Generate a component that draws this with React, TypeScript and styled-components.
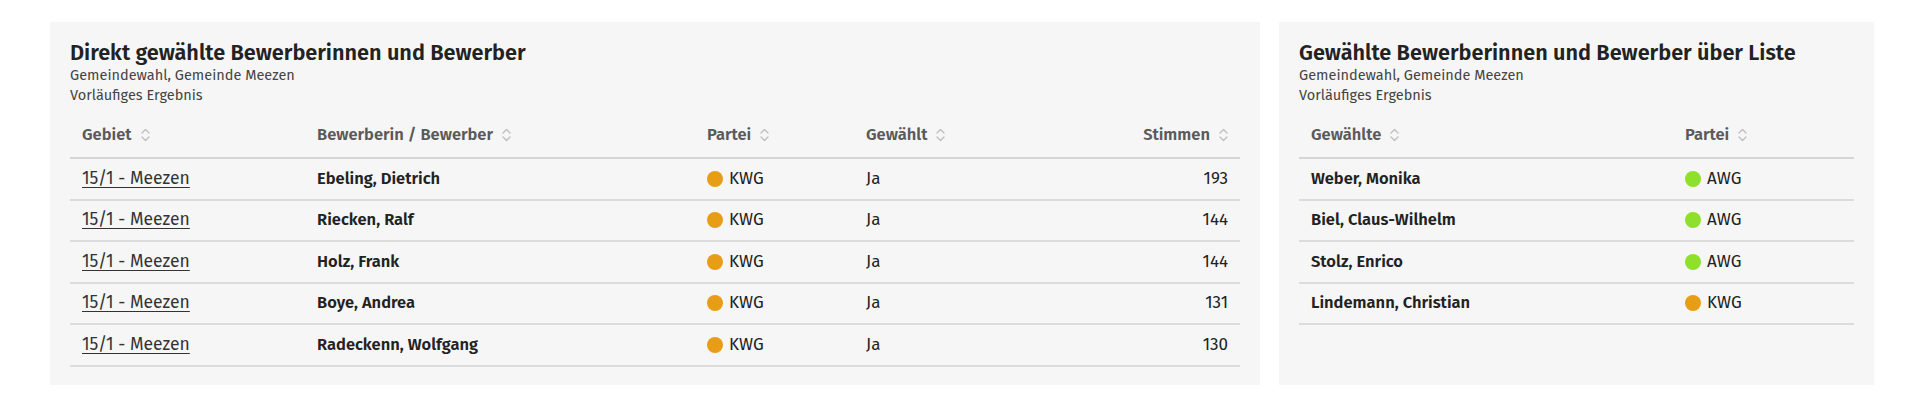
import React from "react";
import styled, { createGlobalStyle } from "styled-components";

const GlobalStyle = createGlobalStyle`
  body {
    margin: 0;
    background: #ffffff;
    font-family: "Fira Sans", Lato, "Noto Sans", sans-serif;
    color: #222222;
  }
`;

const Page = styled.div`
  display: grid;
  grid-template-columns: 1210px 595px;
  column-gap: 19px;
  align-items: stretch;
  padding: 22px 0 0 50px;
`;

const Panel = styled.section`
  background: #f6f6f6;
  padding: 19px 20px 18px;
`;

const Title = styled.h2`
  margin: 0;
  font-size: 21.7px;
  line-height: 24px;
  font-weight: 600;
  color: #222222;
`;

const Meta = styled.p`
  margin: 0;
  font-size: 14.5px;
  line-height: 20px;
  color: #444444;
`;

const Table = styled.table`
  width: 100%;
  margin-top: 6px;
  border-collapse: collapse;
  table-layout: fixed;
`;

const Col = styled.col<{ $width?: number }>`
  width: ${(p) => (p.$width ? `${p.$width}px` : "auto")};
`;

const HeadCell = styled.th<{ $align?: "left" | "right" }>`
  padding: 12px 12px 10px;
  text-align: ${(p) => p.$align ?? "left"};
  font-size: 16.5px;
  line-height: 24px;
  font-weight: 600;
  color: #5a5a5a;
  border-bottom: 2px solid #d6d6d6;
  white-space: nowrap;
`;

const SortLabel = styled.span`
  display: inline-flex;
  align-items: center;
  vertical-align: top;
  gap: 9px;
`;

const Cell = styled.td<{ $align?: "left" | "right"; $bold?: boolean }>`
  padding: 8.75px 12px;
  text-align: ${(p) => p.$align ?? "left"};
  font-size: ${(p) => (p.$bold ? "16.5px" : "17px")};
  line-height: 22px;
  font-weight: ${(p) => (p.$bold ? 600 : 400)};
  color: #222222;
  border-bottom: 2px solid #dcdcdc;
  white-space: nowrap;
`;

const AreaLink = styled.a`
  color: #333333;
  font-size: 17.5px;
  text-decoration: underline;
  text-underline-offset: 3px;
  text-decoration-thickness: 1px;
`;

const Party = styled.span`
  display: flex;
  align-items: center;
  gap: 6px;
`;

const Dot = styled.span<{ $color: string }>`
  width: 16px;
  height: 16px;
  border-radius: 50%;
  background: ${(p) => p.$color};
  flex: none;
`;

const SortIcon = () => (
  <svg width="9" height="14" viewBox="0 0 9 14" fill="none" aria-hidden="true">
    <path d="M1 5 L4.5 1.5 L8 5" stroke="#bdbdbd" strokeWidth="1.3" strokeLinecap="round" strokeLinejoin="round" />
    <path d="M1 9 L4.5 12.5 L8 9" stroke="#bdbdbd" strokeWidth="1.3" strokeLinecap="round" strokeLinejoin="round" />
  </svg>
);

const partyColors: Record<string, string> = {
  KWG: "#e89d17",
  AWG: "#8fe02b",
};

const Head = ({ label, align }: { label: string; align?: "left" | "right" }) => (
  <HeadCell $align={align}>
    <SortLabel>
      {label}
      <SortIcon />
    </SortLabel>
  </HeadCell>
);

const PartyTag = ({ name }: { name: string }) => (
  <Party>
    <Dot $color={partyColors[name]} />
    {name}
  </Party>
);

const direct = [
  { name: "Ebeling, Dietrich", party: "KWG", votes: 193 },
  { name: "Riecken, Ralf", party: "KWG", votes: 144 },
  { name: "Holz, Frank", party: "KWG", votes: 144 },
  { name: "Boye, Andrea", party: "KWG", votes: 131 },
  { name: "Radeckenn, Wolfgang", party: "KWG", votes: 130 },
];

const list = [
  { name: "Weber, Monika", party: "AWG" },
  { name: "Biel, Claus-Wilhelm", party: "AWG" },
  { name: "Stolz, Enrico", party: "AWG" },
  { name: "Lindemann, Christian", party: "KWG" },
];

const PanelHeader = ({ title }: { title: string }) => (
  <>
    <Title>{title}</Title>
    <Meta>Gemeindewahl, Gemeinde Meezen</Meta>
    <Meta>Vorläufiges Ergebnis</Meta>
  </>
);

const App = (): JSX.Element => (
  <>
    <GlobalStyle />
    <Page>
      <Panel>
        <PanelHeader title="Direkt gewählte Bewerberinnen und Bewerber" />
        <Table>
          <colgroup>
            <Col $width={235} />
            <Col $width={390} />
            <Col $width={159} />
            <Col $width={250} />
            <Col />
          </colgroup>
          <thead>
            <tr>
              <Head label="Gebiet" />
              <Head label="Bewerberin / Bewerber" />
              <Head label="Partei" />
              <Head label="Gewählt" />
              <Head label="Stimmen" align="right" />
            </tr>
          </thead>
          <tbody>
            {direct.map((row) => (
              <tr key={row.name}>
                <Cell>
                  <AreaLink href="#">15/1 - Meezen</AreaLink>
                </Cell>
                <Cell $bold>{row.name}</Cell>
                <Cell>
                  <PartyTag name={row.party} />
                </Cell>
                <Cell>Ja</Cell>
                <Cell $align="right">{row.votes}</Cell>
              </tr>
            ))}
          </tbody>
        </Table>
      </Panel>
      <Panel>
        <PanelHeader title="Gewählte Bewerberinnen und Bewerber über Liste" />
        <Table>
          <colgroup>
            <Col $width={374} />
            <Col />
          </colgroup>
          <thead>
            <tr>
              <Head label="Gewählte" />
              <Head label="Partei" />
            </tr>
          </thead>
          <tbody>
            {list.map((row) => (
              <tr key={row.name}>
                <Cell $bold>{row.name}</Cell>
                <Cell>
                  <PartyTag name={row.party} />
                </Cell>
              </tr>
            ))}
          </tbody>
        </Table>
      </Panel>
    </Page>
  </>
);

export default App;
